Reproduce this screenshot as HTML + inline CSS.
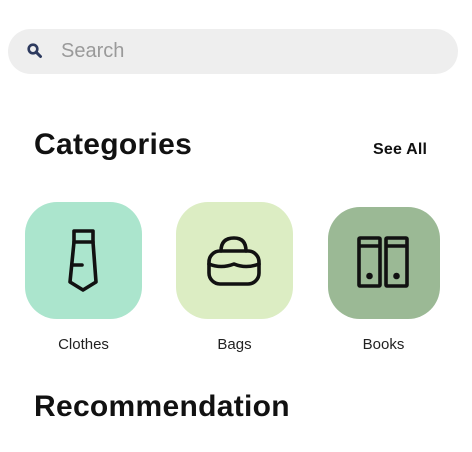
<!DOCTYPE html>
<html><head><meta charset="utf-8"><style>
*{margin:0;padding:0;box-sizing:border-box}
body{width:472px;height:452px;background:#fff;font-family:"Liberation Sans",sans-serif;position:relative;overflow:hidden}
.abs{position:absolute}
.search{left:8px;top:29px;width:450px;height:45px;border-radius:23px;background:#eeeeee}
.search span{position:absolute;left:53px;top:11px;font-size:20px;color:#9a9a9a}
h1{position:absolute;font-size:30px;font-weight:bold;color:#111;letter-spacing:0.3px}
.see{left:373px;top:141px;font-size:16px;font-weight:bold;color:#111;letter-spacing:0.2px}
.box{position:absolute;border-radius:32px}
.lbl{position:absolute;top:336px;font-size:15px;color:#222;width:117px;text-align:center}
svg{position:absolute}
</style></head><body>
<div class="abs search">
<svg style="left:18px;top:13px" width="18" height="18" viewBox="0 0 18 18"><circle cx="7" cy="7" r="4.3" fill="none" stroke="#2d3a5e" stroke-width="2.6"/><line x1="10.2" y1="10.2" x2="14.5" y2="14.5" stroke="#2d3a5e" stroke-width="3" stroke-linecap="round"/></svg>
<span>Search</span></div>
<h1 style="left:34px;top:128px">Categories</h1>
<div class="abs see">See All</div>

<div class="box" style="left:25px;top:202px;width:117px;height:117px;background:#abe5cd"></div>
<svg style="left:25px;top:202px" width="117" height="117" viewBox="0 0 117 117" fill="none" stroke="#111" stroke-width="3.6" stroke-linejoin="round" stroke-linecap="round">
<rect x="49" y="29" width="19" height="11"/>
<path d="M49 40 L45 80 L58 88 L71 80 L68 40"/>
<path d="M47 63 L57 63"/>
</svg>
<div class="lbl" style="left:25px">Clothes</div>

<div class="box" style="left:176px;top:202px;width:117px;height:117px;background:#dcedc3"></div>
<svg style="left:176px;top:202px" width="117" height="117" viewBox="0 0 117 117" fill="none" stroke="#111" stroke-width="3.6" stroke-linejoin="round" stroke-linecap="round">
<path d="M45 49 Q45 36 58 36 Q70 36 70 49"/>
<rect x="33" y="49" width="50" height="33" rx="11"/>
<path d="M33 62 Q45 67 58 62 Q70 67 83 62"/>
</svg>
<div class="lbl" style="left:176px">Bags</div>

<div class="box" style="left:328px;top:207px;width:112px;height:112px;background:#9bb995"></div>
<svg style="left:328px;top:202px" width="117" height="117" viewBox="0 0 117 117" fill="none" stroke="#111" stroke-width="3.6" stroke-linejoin="round">
<rect x="31" y="36" width="21" height="48" rx="1"/>
<rect x="58" y="36" width="21" height="48" rx="1"/>
<path d="M31 44 H52 M58 44 H79"/>
<circle cx="41.5" cy="74" r="1.5" fill="#111"/>
<circle cx="68.5" cy="74" r="1.5" fill="#111"/>
</svg>
<div class="lbl" style="left:325px">Books</div>

<h1 style="left:34px;top:390px;font-size:30px">Recommendation</h1>
</body></html>
